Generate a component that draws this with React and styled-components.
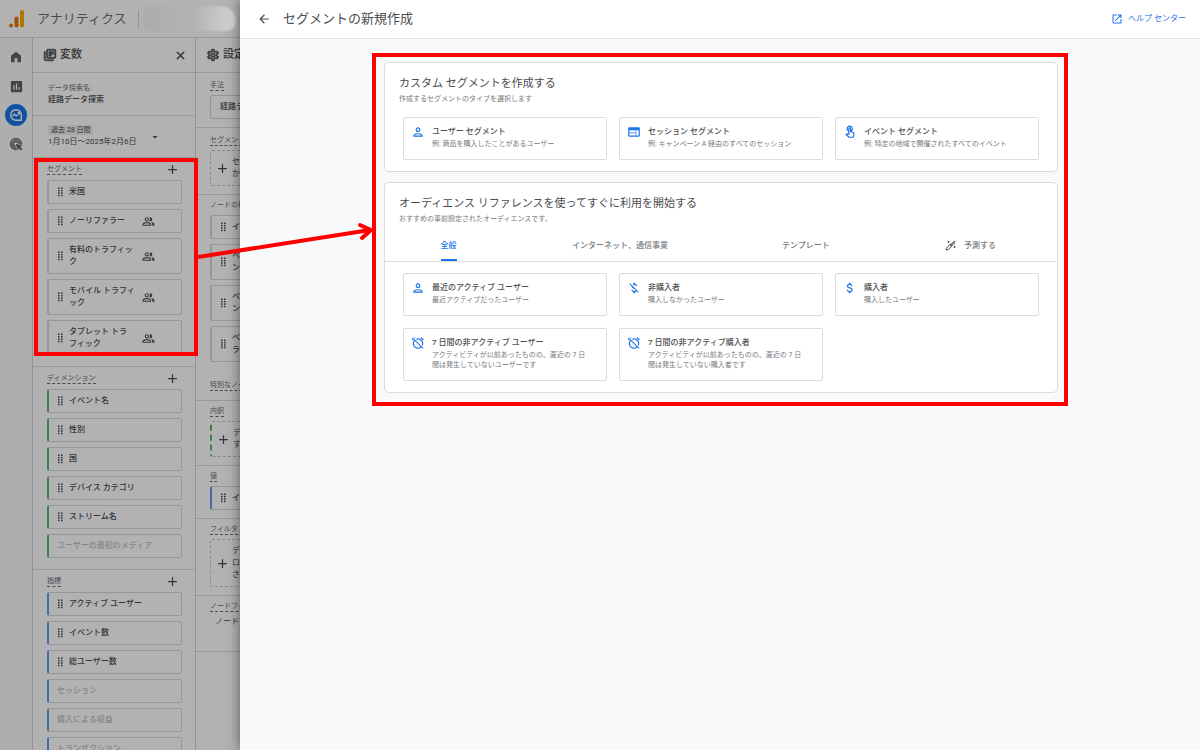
import React, { useState } from "react";
import styled, { createGlobalStyle, css } from "styled-components";
import {
  MdAdd,
  MdAdsClick,
  MdAlarmOff,
  MdArrowBack,
  MdArrowDropDown,
  MdAttachMoney,
  MdClose,
  MdInsertChart,
  MdMoneyOff,
  MdOpenInNew,
  MdOutlineLibraryBooks,
  MdOutlinePeopleAlt,
  MdOutlinePerson,
  MdOutlineSettings,
  MdOutlineTouchApp,
  MdWeb,
} from "react-icons/md";

const GlobalStyle = createGlobalStyle`
  * {
    box-sizing: border-box;
  }
  body {
    margin: 0;
    font-family: Roboto, "Noto Sans CJK JP", sans-serif;
    color: #4a4d51;
    overflow: hidden;
  }
  button {
    font: inherit;
    color: inherit;
    background: none;
    border: 0;
    padding: 0;
    cursor: pointer;
  }
  svg {
    flex-shrink: 0;
    display: block;
  }
  svg path[fill="none"] {
    stroke: none;
  }
`;

const Page = styled.div`
  position: relative;
  height: 100vh;
  overflow: hidden;
  background: #fff;
`;

const Backdrop = styled.div`
  position: absolute;
  inset: 0;
  z-index: 1;
  background: rgba(0, 0, 0, 0.3);
`;

const TopBar = styled.header`
  display: flex;
  align-items: center;
  height: 38px;
  padding-left: 9px;
  background: #fff;
  border-bottom: 1px solid #dadce0;
`;

const Brand = styled.div`
  margin-left: 12px;
  font-size: 13px;
  line-height: 20px;
  color: #6b7075;
`;

const BarDivider = styled.div`
  width: 1px;
  height: 18px;
  margin: 0 5px 0 11px;
  background: #d0d3d7;
`;

const Redacted = styled.div`
  position: relative;
  z-index: 2;
  width: 92px;
  height: 25px;
  border-radius: 6px 18px 12px 6px;
  background: linear-gradient(95deg, #acacac 0%, #b3b3b3 55%, #d6d6d6 100%);
  filter: blur(1px);
`;

const Workspace = styled.div`
  display: flex;
  height: calc(100vh - 38px);
`;

const Rail = styled.nav`
  display: flex;
  flex-direction: column;
  align-items: center;
  width: 33px;
  padding-top: 5px;
  background: #f8f9fa;
  border-right: 1px solid #d0d3d7;
`;

const RailButton = styled.button`
  display: flex;
  align-items: center;
  justify-content: center;
  width: 22px;
  height: 22px;
  margin: 3px 0 4px;
  border-radius: 50%;
  color: #5f6368;
  ${({ $active }) =>
    $active &&
    css`
      color: #fff;
      background: #1a73e8;
    `}
`;

const Column = styled.section`
  flex-shrink: 0;
  width: 163px;
  border-right: 1px solid #d0d3d7;
`;

const ColumnHeader = styled.div`
  display: flex;
  align-items: center;
  gap: 3px;
  height: 35px;
  padding: 0 8px 0 10px;
  border-bottom: 1px solid #dadce0;
  svg {
    stroke: currentColor;
    stroke-width: 1;
  }
`;

const ColumnTitle = styled.h2`
  flex: 1;
  margin: 0;
  font-size: 11px;
  font-weight: 500;
  line-height: 16px;
`;

const InfoRow = styled.div`
  display: flex;
  align-items: center;
  height: ${({ $height }) => $height}px;
  padding: 0 34px 0 15px;
  border-bottom: 1px solid #dadce0;
`;

const InfoText = styled.div`
  flex: 1;
  white-space: nowrap;
`;

const InfoLabel = styled.div`
  font-size: 7px;
  line-height: 11px;
  color: #6b7075;
`;

const InfoValue = styled.div`
  font-size: 8px;
  font-weight: ${({ $light }) => ($light ? 400 : 500)};
  line-height: 12px;
`;

const DatePill = styled.span`
  padding: 1px 3px;
  font-size: 7px;
  font-weight: 500;
  background: #eceef0;
`;

const Section = styled.div`
  position: relative;
  padding: 0 13px 11px 14px;
  border-bottom: 1px solid #dadce0;
`;

const SectionHeader = styled.div`
  display: flex;
  align-items: center;
  justify-content: space-between;
  height: 22px;
  padding-right: 2px;
`;

const SectionLabel = styled.div`
  width: fit-content;
  font-size: 7px;
  line-height: 10px;
  white-space: nowrap;
  color: #6b7075;
  border-bottom: 1px dashed ${({ $plain }) => ($plain ? "transparent" : "#6b7075")};
`;

const IconButton = styled.button`
  display: flex;
`;

const ChipList = styled.div`
  display: flex;
  flex-direction: column;
  gap: 5px;
  overflow: hidden;
  ${({ $scroll }) =>
    $scroll &&
    css`
      max-height: 174px;
      margin-bottom: 1px;
    `}
`;

const accents = { green: "#5bb86a", blue: "#6399f5" };

const Chip = styled.div`
  display: flex;
  flex-shrink: 0;
  align-items: center;
  gap: 5px;
  height: ${({ $lines = 1 }) => 12 + $lines * 12}px;
  padding-left: 8px;
  font-size: 8px;
  font-weight: 500;
  line-height: 12px;
  color: ${({ $muted }) => ($muted ? "#bdc1c6" : "#4a4d51")};
  border: 1px solid #d5d8db;
  border-left: 2px solid ${({ $accent }) => accents[$accent] || "#d5d8db"};
  border-radius: 2px;
`;

const ChipText = styled.span`
  width: ${({ $withIcon }) => ($withIcon ? "68px" : "auto")};
  white-space: pre;
`;

const SettingSection = styled.div`
  display: flex;
  flex-direction: column;
  gap: ${({ $gap = 4 }) => $gap}px;
  padding: ${({ $top = 5 }) => $top}px 13px 8px 14px;
  border-bottom: 1px solid #dadce0;
`;

const SpecialNodes = styled.div`
  padding: 14px 0 1px;
`;

const DropZone = styled.div`
  display: flex;
  align-items: center;
  gap: 2px;
  height: ${({ $lines = 2 }) => 12 + $lines * 12}px;
  padding-left: 4px;
  font-size: 8px;
  line-height: 12px;
  white-space: pre;
  border: 1px dashed #c4c7cb;
  border-radius: 2px;
  ${({ $accent }) =>
    $accent &&
    css`
      border-left: 2px dashed ${accents[$accent]};
    `}
`;

const TechniqueButton = styled.button`
  height: 24px;
  padding-left: 9px;
  font-size: 8px;
  font-weight: 500;
  line-height: 12px;
  text-align: left;
  border: 1px solid #d0d3d7;
  border-radius: 2px;
`;

const NodeFilter = styled.div`
  height: 27px;
  padding-left: 5px;
  font-size: 8px;
  line-height: 12px;
`;

const Drawer = styled.main`
  position: absolute;
  top: 0;
  right: 0;
  bottom: 0;
  left: 240px;
  z-index: 2;
  padding-left: 2px;
  background: #f8f9fb;
  box-shadow: 0 0 12px rgba(0, 0, 0, 0.5);
`;

const DrawerHeader = styled.header`
  display: flex;
  align-items: center;
  height: 39px;
  margin-left: -2px;
  padding: 0 14px 1px 17px;
  background: #fff;
  border-bottom: 1px solid #e3e5e8;
`;

const DrawerTitle = styled.h1`
  flex: 1;
  margin: 0 0 0 12px;
  font-size: 13px;
  font-weight: 400;
  line-height: 20px;
`;

const HelpLink = styled.a`
  display: flex;
  align-items: center;
  gap: 5px;
  font-size: 8px;
  line-height: 12px;
  color: #1a73e8;
  text-decoration: none;
`;

const Panels = styled.div`
  position: relative;
  display: flex;
  flex-direction: column;
  gap: 10px;
  max-width: 674px;
  margin: 23px auto 0;
`;

const Panel = styled.section`
  padding: 13px 0 11px;
  background: #fff;
  border: 1px solid #dadce0;
  border-radius: 5px;
`;

const PanelTitle = styled.h2`
  margin: 0 14px;
  font-size: 11px;
  font-weight: 400;
  line-height: 16px;
`;

const PanelNote = styled.p`
  margin: 0 14px;
  font-size: 7px;
  line-height: 14px;
  color: #757a80;
`;

const Tabs = styled.div`
  display: grid;
  grid-template-columns: 127fr 216fr 156fr 173fr;
  height: 36px;
  border-bottom: 1px solid #dadce0;
`;

const Tab = styled.button`
  display: flex;
  justify-content: center;
  font-size: 8px;
  font-weight: 500;
  line-height: 12px;
  color: ${({ $active }) => ($active ? "#1a73e8" : "#757a80")};
`;

const TabLabel = styled.span`
  display: flex;
  align-items: center;
  gap: 8px;
  height: 35px;
  padding-top: 6px;
  border-bottom: 2px solid ${({ $active }) => ($active ? "#1a73e8" : "transparent")};
`;

const TileGrid = styled.div`
  display: grid;
  grid-template-columns: repeat(3, 1fr);
  gap: 12px;
  margin: 11px 18px 0;
`;

const Tile = styled.button`
  display: flex;
  align-items: flex-start;
  gap: 7px;
  min-height: 43px;
  padding: 7px 16px 10px 7px;
  text-align: left;
  background: #fff;
  border: 1px solid #dadce0;
  border-radius: 2px;
  svg {
    color: #1a73e8;
  }
`;

const TileTitle = styled.span`
  display: block;
  font-size: 8px;
  font-weight: 500;
  line-height: 14px;
`;

const TileText = styled.span`
  display: block;
  font-size: 7px;
  line-height: 10px;
  color: #757a80;
`;

const Frame = styled.div`
  position: absolute;
  z-index: 3;
  border: 4px solid #f00;
  pointer-events: none;
`;

const SegmentFrame = styled(Frame)`
  top: 0;
  right: -3px;
  bottom: 10px;
  left: 1px;
`;

const PanelsFrame = styled(Frame)`
  top: -9px;
  right: -10px;
  bottom: -13px;
  left: -12px;
`;

const Arrow = styled.svg`
  position: absolute;
  top: 218px;
  left: 198px;
  z-index: 3;
  pointer-events: none;
`;

const Logo = () => (
  <svg width="16" height="18" viewBox="0 0 16 18">
    <circle cx="2" cy="15.5" r="2" fill="#e8710a" />
    <rect x="5.5" y="6.5" width="4" height="11" rx="2" fill="#e8710a" />
    <rect x="11" y="0" width="4" height="17.5" rx="2" fill="#f9ab00" />
  </svg>
);

const HomeIcon = () => (
  <svg width="14" height="14" viewBox="0 0 24 24" fill="currentColor">
    <path d="M3.5 21V9.5L12 3l8.5 6.5V21h-6v-7h-5v7z" />
  </svg>
);

const ExploreIcon = () => (
  <svg width="14" height="14" viewBox="0 0 14 14" fill="none" stroke="currentColor">
    <path d="M12.3 12.3H7A5.3 5.3 0 1 1 12.3 7z" strokeWidth="1.4" strokeLinejoin="round" />
    <path d="M3.3 8.3 5.4 6.2 7.3 8l3.2-3.2" strokeWidth="1.2" />
    <path d="M8.6 4.5h2.2v2.2" strokeWidth="1" />
  </svg>
);

const Grip = () => (
  <svg width="7" height="10" viewBox="0 0 7 10" fill="#4a4d51">
    {[0.5, 2.9, 5.3, 7.7].map((y) => (
      <React.Fragment key={y}>
        <rect x="1" y={y} width="1.6" height="1.5" />
        <rect x="4" y={y} width="1.6" height="1.5" />
      </React.Fragment>
    ))}
  </svg>
);

const WandIcon = () => (
  <svg width="11" height="11" viewBox="0 0 22 22" fill="none" stroke="#4a4d51">
    <path d="M2.5 17 11 7.5l4 3.5-9 8.5-4 .5z" strokeWidth="2" />
    <path d="M10.5 11.5 20 2.5" strokeWidth="3" />
    <path d="M7 2v4M5 4h4M19 12v4M17 14h4M17.5 8h3" strokeWidth="1.8" />
  </svg>
);

const segments = [
  { name: "米国" },
  { name: "ノーリファラー", shared: true },
  { name: "有料のトラフィッ\nク", shared: true, lines: 2 },
  { name: "モバイル トラフィ\nック", shared: true, lines: 2 },
  { name: "タブレット トラ\nフィック", shared: true, lines: 2 },
];

const dimensions = [
  { name: "イベント名" },
  { name: "性別" },
  { name: "国" },
  { name: "デバイス カテゴリ" },
  { name: "ストリーム名" },
  { name: "ユーザーの最初のメディア", muted: true },
];

const metrics = [
  { name: "アクティブ ユーザー" },
  { name: "イベント数" },
  { name: "総ユーザー数" },
  { name: "セッション", muted: true },
  { name: "購入による収益", muted: true },
  { name: "トランザクション", muted: true },
];

const nodeTypes = [
  { name: "イベント名" },
  { name: "ページ タイト\nンとスクリーン", lines: 2 },
  { name: "ページ タイト\nン名", lines: 2 },
  { name: "ページ パスと\nラス", lines: 2 },
];

const customTiles = [
  { icon: MdOutlinePerson, title: "ユーザー セグメント", text: "例: 商品を購入したことがあるユーザー" },
  { icon: MdWeb, title: "セッション セグメント", text: "例: キャンペーン A 経由のすべてのセッション" },
  { icon: MdOutlineTouchApp, title: "イベント セグメント", text: "例: 特定の地域で開催されたすべてのイベント" },
];

const audienceTiles = [
  { icon: MdOutlinePerson, title: "最近のアクティブ ユーザー", text: "最近アクティブだったユーザー" },
  { icon: MdMoneyOff, title: "非購入者", text: "購入しなかったユーザー" },
  { icon: MdAttachMoney, title: "購入者", text: "購入したユーザー" },
  {
    icon: MdAlarmOff,
    title: "7 日間の非アクティブ ユーザー",
    text: "アクティビティが以前あったものの、直近の 7 日間は発生していないユーザーです",
  },
  {
    icon: MdAlarmOff,
    title: "7 日間の非アクティブ購入者",
    text: "アクティビティが以前あったものの、直近の 7 日間は発生していない購入者です",
  },
];

const tabs = ["全般", "インターネット、通信事業", "テンプレート", "予測する"];

const Chips = ({ items, accent, scroll }) => (
  <ChipList $scroll={scroll}>
    {items.map((item, index) => (
      <Chip key={index} $accent={accent} $lines={item.lines} $muted={item.muted}>
        {!item.muted && <Grip />}
        <ChipText $withIcon={item.shared}>{item.name}</ChipText>
        {item.shared && <MdOutlinePeopleAlt size={13} />}
      </Chip>
    ))}
  </ChipList>
);

const VariableSection = ({ label, children, ...rest }) => (
  <Section>
    <SectionHeader>
      <SectionLabel>{label}</SectionLabel>
      <IconButton aria-label={`${label}を追加`}>
        <MdAdd size={15} />
      </IconButton>
    </SectionHeader>
    <Chips {...rest} />
    {children}
  </Section>
);

const Tiles = ({ items }) => (
  <TileGrid>
    {items.map(({ icon: Icon, title, text }) => (
      <Tile key={title}>
        <Icon size={14} />
        <span>
          <TileTitle>{title}</TileTitle>
          <TileText>{text}</TileText>
        </span>
      </Tile>
    ))}
  </TileGrid>
);

const App = () => {
  const [tab, setTab] = useState("全般");

  return (
    <Page>
      <GlobalStyle />
      <TopBar>
        <Logo />
        <Brand>アナリティクス</Brand>
        <BarDivider />
        <Redacted />
        <MdArrowDropDown size={14} />
      </TopBar>

      <Workspace>
        <Rail>
          <RailButton aria-label="ホーム">
            <HomeIcon />
          </RailButton>
          <RailButton aria-label="レポート">
            <MdInsertChart size={15} />
          </RailButton>
          <RailButton aria-label="探索" $active>
            <ExploreIcon />
          </RailButton>
          <RailButton aria-label="広告">
            <MdAdsClick size={14} stroke="currentColor" strokeWidth={1} />
          </RailButton>
        </Rail>

        <Column>
          <ColumnHeader>
            <MdOutlineLibraryBooks size={14} />
            <ColumnTitle>変数</ColumnTitle>
            <IconButton aria-label="閉じる">
              <MdClose size={13} />
            </IconButton>
          </ColumnHeader>
          <InfoRow $height={43}>
            <InfoText>
              <InfoLabel>データ探索名:</InfoLabel>
              <InfoValue>経路データ探索</InfoValue>
            </InfoText>
          </InfoRow>
          <InfoRow $height={42}>
            <InfoText>
              <InfoLabel>
                <DatePill>過去 28 日間</DatePill>
              </InfoLabel>
              <InfoValue $light>1月10日〜2025年2月6日</InfoValue>
            </InfoText>
            <IconButton aria-label="期間を選択">
              <MdArrowDropDown size={12} />
            </IconButton>
          </InfoRow>
          <VariableSection label="セグメント" items={segments} scroll>
            <SegmentFrame />
          </VariableSection>
          <VariableSection label="ディメンション" items={dimensions} accent="green" />
          <VariableSection label="指標" items={metrics} accent="blue" />
        </Column>

        <Column>
          <ColumnHeader>
            <MdOutlineSettings size={14} />
            <ColumnTitle>設定</ColumnTitle>
          </ColumnHeader>
          <SettingSection $top={7}>
            <SectionLabel>手法</SectionLabel>
            <TechniqueButton>経路データ探索</TechniqueButton>
          </SettingSection>
          <SettingSection $top={7}>
            <SectionLabel>セグメントの比較</SectionLabel>
            <DropZone>
              <MdAdd size={15} />
              {"セグメントをドロップする\nか選択してください"}
            </DropZone>
          </SettingSection>
          <SettingSection>
            <SectionLabel $plain>ノードの種類</SectionLabel>
            <Chips items={nodeTypes} />
            <SpecialNodes>
              <SectionLabel>特別なノード</SectionLabel>
            </SpecialNodes>
          </SettingSection>
          <SettingSection>
            <SectionLabel>内訳</SectionLabel>
            <DropZone $accent="green">
              <MdAdd size={15} />
              {"ディメンションをドロップ\nするか選択してください"}
            </DropZone>
          </SettingSection>
          <SettingSection>
            <SectionLabel>値</SectionLabel>
            <Chips items={[{ name: "イベント数" }]} accent="blue" />
          </SettingSection>
          <SettingSection>
            <SectionLabel>フィルタ</SectionLabel>
            <DropZone $lines={3}>
              <MdAdd size={15} />
              {"ディメンションや指標をド\nロップするか選択してくだ\nさい"}
            </DropZone>
          </SettingSection>
          <SettingSection>
            <SectionLabel>ノードフィルタ</SectionLabel>
            <NodeFilter>ノードを選択</NodeFilter>
          </SettingSection>
        </Column>
      </Workspace>

      <Backdrop />

      <Drawer>
        <DrawerHeader>
          <IconButton aria-label="戻る">
            <MdArrowBack size={14} />
          </IconButton>
          <DrawerTitle>セグメントの新規作成</DrawerTitle>
          <HelpLink href="#help">
            <MdOpenInNew size={12} />
            ヘルプ センター
          </HelpLink>
        </DrawerHeader>

        <Panels>
          <Panel>
            <PanelTitle>カスタム セグメントを作成する</PanelTitle>
            <PanelNote>作成するセグメントのタイプを選択します</PanelNote>
            <Tiles items={customTiles} />
          </Panel>
          <Panel>
            <PanelTitle>オーディエンス リファレンスを使ってすぐに利用を開始する</PanelTitle>
            <PanelNote>おすすめの事前設定されたオーディエンスです。</PanelNote>
            <Tabs role="tablist">
              {tabs.map((name) => (
                <Tab
                  key={name}
                  role="tab"
                  aria-selected={tab === name}
                  $active={tab === name}
                  onClick={() => setTab(name)}
                >
                  <TabLabel $active={tab === name}>
                    {name === "予測する" && <WandIcon />}
                    {name}
                  </TabLabel>
                </Tab>
              ))}
            </Tabs>
            <Tiles items={audienceTiles} />
          </Panel>
          <PanelsFrame />
        </Panels>
      </Drawer>

      <Arrow width="180" height="44" viewBox="0 0 180 44" fill="none" stroke="#f00" strokeWidth="4">
        <path d="M0 39 172 12" />
        <path d="M162 7l11 5-9 8" strokeLinecap="round" strokeLinejoin="round" />
      </Arrow>
    </Page>
  );
};

export default App;
